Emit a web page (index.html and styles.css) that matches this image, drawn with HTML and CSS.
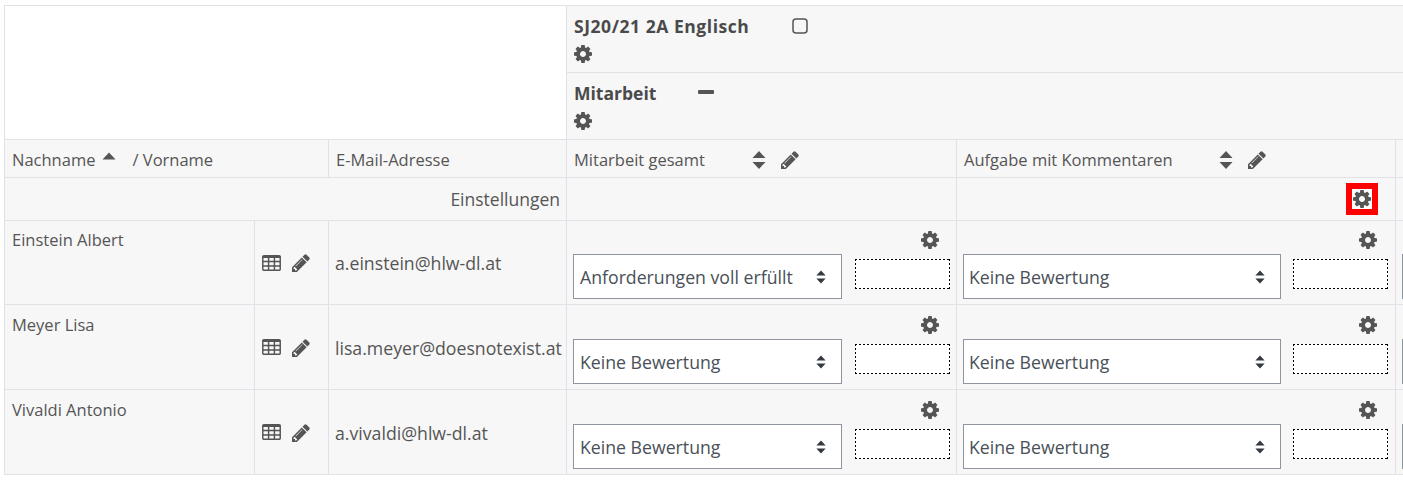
FILE: index.html
```html
<!DOCTYPE html>
<html lang="de">
<head>
<meta charset="utf-8">
<title>Bewertungen</title>
<link rel="stylesheet" href="styles.css">
</head>
<body>
<svg class="defs" width="0" height="0" aria-hidden="true">
  <symbol id="cog" viewBox="128 128 1536 1536"><path d="M1152 896q0-106-75-181t-181-75-181 75-75 181 75 181 181 75 181-75 75-181zm512-109v222q0 12-8 23t-20 13l-185 28q-19 54-39 91 35 50 107 138 10 12 10 25t-9 23q-27 37-99 108t-94 71q-12 0-26-9l-138-108q-44 23-91 38-16 136-29 186-7 28-36 28h-222q-14 0-24.500-8.500t-11.500-21.500l-28-184q-49-16-90-37l-141 107q-10 9-25 9-14 0-25-11-126-114-165-168-7-10-7-23 0-12 8-23 15-21 51-66.500t54-70.500q-27-50-41-99l-183-27q-13-2-21-12.500t-8-23.500v-222q0-12 8-23t19-13l186-28q14-46 39-92-40-57-107-138-10-12-10-24 0-10 9-23 26-36 98.500-107.500t94.500-71.500q13 0 26 10l138 107q44-23 91-38 16-136 29-186 7-28 36-28h222q14 0 24.500 8.500t11.500 21.500l28 184q49 16 90 37l142-107q9-9 24-9 13 0 25 10 129 119 165 170 7 8 7 22 0 12-8 23-15 21-51 66.500t-54 70.500q26 50 41 98l183 28q13 2 21 12.500t8 23.500z"/></symbol>
  <symbol id="pencil" viewBox="0 0 1536 1536"><path d="M363 1408l91-91-235-235-91 91v107h128v128h107zm523-928q0-22-22-22-10 0-17 7l-542 542q-7 7-7 17 0 22 22 22 10 0 17-7l542-542q7-7 7-17zm-54-192l416 416-832 832h-416v-416zm683 96q0 53-37 90l-166 166-416-416 166-165q36-38 90-38 53 0 91 38l235 234q37 39 37 91z"/></symbol>
  <symbol id="grid" viewBox="0 0 1664 1408"><path d="M512 1248v-192q0-14-9-23t-23-9h-320q-14 0-23 9t-9 23v192q0 14 9 23t23 9h320q14 0 23-9t9-23zm0-384v-192q0-14-9-23t-23-9h-320q-14 0-23 9t-9 23v192q0 14 9 23t23 9h320q14 0 23-9t9-23zm512 384v-192q0-14-9-23t-23-9h-320q-14 0-23 9t-9 23v192q0 14 9 23t23 9h320q14 0 23-9t9-23zm-512-768v-192q0-14-9-23t-23-9h-320q-14 0-23 9t-9 23v192q0 14 9 23t23 9h320q14 0 23-9t9-23zm512 384v-192q0-14-9-23t-23-9h-320q-14 0-23 9t-9 23v192q0 14 9 23t23 9h320q14 0 23-9t9-23zm512 384v-192q0-14-9-23t-23-9h-320q-14 0-23 9t-9 23v192q0 14 9 23t23 9h320q14 0 23-9t9-23zm-512-768v-192q0-14-9-23t-23-9h-320q-14 0-23 9t-9 23v192q0 14 9 23t23 9h320q14 0 23-9t9-23zm512 384v-192q0-14-9-23t-23-9h-320q-14 0-23 9t-9 23v192q0 14 9 23t23 9h320q14 0 23-9t9-23zm0-384v-192q0-14-9-23t-23-9h-320q-14 0-23 9t-9 23v192q0 14 9 23t23 9h320q14 0 23-9t9-23zm128-320v1088q0 66-47 113t-113 47h-1344q-66 0-113-47t-47-113v-1088q0-66 47-113t113-47h1344q66 0 113 47t47 113z"/></symbol>
  <symbol id="sort" viewBox="0 0 14 18"><path d="M7 0l6.500 7H.5zM7 18L.5 11h13z"/></symbol>
  <symbol id="up" viewBox="0 0 14 8"><path d="M7 .5L13.500 7.500H.5z"/></symbol>
</svg>
<table class="grades">
  <colgroup>
    <col class="c-name"><col class="c-act"><col class="c-mail"><col class="c-g1"><col class="c-g2"><col class="c-g3">
  </colgroup>
  <tbody>
    <tr class="r-cat">
      <td class="blank" colspan="3" rowspan="2"></td>
      <td class="cat" colspan="3">
        <div class="cat-title"><b class="t1">SJ20/21 2A Englisch</b><svg class="ic-square" viewBox="0 0 16 16"><rect x="1" y="1" width="14" height="14" rx="3"/></svg></div>
        <svg class="ic ic-cog"><use href="#cog"/></svg>
      </td>
    </tr>
    <tr class="r-cat">
      <td class="cat" colspan="3">
        <div class="cat-title"><b class="t2">Mitarbeit</b><span class="minus"></span></div>
        <svg class="ic ic-cog"><use href="#cog"/></svg>
      </td>
    </tr>
    <tr class="r-head">
      <td colspan="2"><div class="head"><span>Nachname</span><svg class="ic-up"><use href="#up"/></svg><span class="vor">/ Vorname</span></div></td>
      <td><div class="head">E-Mail-Adresse</div></td>
      <td><div class="head"><span class="h1">Mitarbeit gesamt</span><svg class="ic-sort"><use href="#sort"/></svg><svg class="ic ic-pen"><use href="#pencil"/></svg></div></td>
      <td><div class="head"><span class="h2">Aufgabe mit Kommentaren</span><svg class="ic-sort"><use href="#sort"/></svg><svg class="ic ic-pen"><use href="#pencil"/></svg></div></td>
      <td></td>
    </tr>
    <tr class="r-set">
      <td class="set-label" colspan="3">Einstellungen</td>
      <td></td>
      <td><div class="set-cog"><span class="marked"><svg class="ic ic-cog"><use href="#cog"/></svg></span></div></td>
      <td></td>
    </tr>
    <tr class="r-user r1">
      <td class="name">Einstein Albert</td>
      <td><div class="acts"><svg class="ic ic-grid"><use href="#grid"/></svg><svg class="ic ic-pen"><use href="#pencil"/></svg></div></td>
      <td class="mail">a.einstein@hlw-dl.at</td>
      <td class="g"><div class="g-cog"><svg class="ic ic-cog"><use href="#cog"/></svg></div><div class="g-row"><div class="sel w1"><span>Anforderungen voll erfüllt</span><svg class="ic-sel"><use href="#sort"/></svg></div><div class="fb"></div></div></td>
      <td class="g"><div class="g-cog"><svg class="ic ic-cog"><use href="#cog"/></svg></div><div class="g-row"><div class="sel w2"><span>Keine Bewertung</span><svg class="ic-sel"><use href="#sort"/></svg></div><div class="fb"></div></div></td>
      <td class="g"><div class="g-row cut"><div class="sel w2"></div></div></td>
    </tr>
    <tr class="r-user r2">
      <td class="name">Meyer Lisa</td>
      <td><div class="acts"><svg class="ic ic-grid"><use href="#grid"/></svg><svg class="ic ic-pen"><use href="#pencil"/></svg></div></td>
      <td class="mail">lisa.meyer@doesnotexist.at</td>
      <td class="g"><div class="g-cog"><svg class="ic ic-cog"><use href="#cog"/></svg></div><div class="g-row"><div class="sel w1"><span>Keine Bewertung</span><svg class="ic-sel"><use href="#sort"/></svg></div><div class="fb"></div></div></td>
      <td class="g"><div class="g-cog"><svg class="ic ic-cog"><use href="#cog"/></svg></div><div class="g-row"><div class="sel w2"><span>Keine Bewertung</span><svg class="ic-sel"><use href="#sort"/></svg></div><div class="fb"></div></div></td>
      <td class="g"><div class="g-row cut"><div class="sel w2"></div></div></td>
    </tr>
    <tr class="r-user r2">
      <td class="name">Vivaldi Antonio</td>
      <td><div class="acts"><svg class="ic ic-grid"><use href="#grid"/></svg><svg class="ic ic-pen"><use href="#pencil"/></svg></div></td>
      <td class="mail">a.vivaldi@hlw-dl.at</td>
      <td class="g"><div class="g-cog"><svg class="ic ic-cog"><use href="#cog"/></svg></div><div class="g-row"><div class="sel w1"><span>Keine Bewertung</span><svg class="ic-sel"><use href="#sort"/></svg></div><div class="fb"></div></div></td>
      <td class="g"><div class="g-cog"><svg class="ic ic-cog"><use href="#cog"/></svg></div><div class="g-row"><div class="sel w2"><span>Keine Bewertung</span><svg class="ic-sel"><use href="#sort"/></svg></div><div class="fb"></div></div></td>
      <td class="g"><div class="g-row cut"><div class="sel w2"></div></div></td>
    </tr>
  </tbody>
</table>
</body>
</html>
```
FILE: styles.css
```css
html, body { background: #fff; }
body {
  margin: 0;
  padding: 5px 0 0 4px;
  width: 1399px;
  height: 475px;
  overflow: hidden;
  font-family: "Open Sans", "Noto Sans", sans-serif;
  font-size: 16.500px;
  color: #555;
}
.defs { position: absolute; }
.grades {
  border-collapse: collapse;
  table-layout: fixed;
  width: 1500px;
}
.c-name { width: 250px; }
.c-act { width: 74px; }
.c-mail { width: 238px; }
.c-g1 { width: 390px; }
.c-g2 { width: 439px; }
.c-g3 { width: 109px; }
td {
  border: 1px solid #e0e2e8;
  background: #f7f7f7;
  padding: 0;
  white-space: nowrap;
}
td.blank { background: #fff; }
.r-cat { height: 67px; }
.r-head { height: 38px; }
.r-set { height: 43px; }
.r1 { height: 84px; }
.r2 { height: 85px; }
.ic { display: block; fill: #555; }
.ic-cog { width: 18px; height: 18px; }
.ic-pen { width: 18px; height: 18px; }
.ic-grid { width: 19px; height: 16px; }
.cat { padding: 9px 7px 0; vertical-align: top; }
.cat-title { display: flex; align-items: center; height: 22px; margin-bottom: 8px; font-size: 17.500px; }
.cat-title b { font-weight: 700; color: #4a4a4a; }
.t1 { width: 218px; letter-spacing: .55px; }
.t2 { width: 124px; }
.ic-square { width: 16px; height: 16px; fill: none; stroke: #555; stroke-width: 1.500; }
.minus { width: 16px; height: 4px; border-radius: 1px; background: #555; margin-top: -2px; }
.head { display: flex; align-items: center; padding: 2px 7px 0; }
.ic-up { width: 14px; height: 8px; fill: #555; margin: -7px 0 0 7px; }
.vor { margin-left: 16px; }
.h1 { width: 178px; }
.h2 { width: 255px; }
.ic-sort { width: 14px; height: 18px; fill: #555; margin-right: 15px; }
.set-label { text-align: right; padding-right: 6px; font-size: 17.500px; }
.set-cog { display: flex; justify-content: flex-end; padding-right: 17px; }
.marked { display: block; border: 6px solid #f00; background: #fff; padding: 1px; }
.name { vertical-align: top; padding: 7px 7px 0; }
.r2 .name { padding-top: 8px; }
.acts { display: flex; gap: 11px; align-items: center; padding-left: 7px; }
.acts .ic-pen { margin-top: 1px; }
.mail { padding-left: 6px; font-size: 17.700px; }
.r2 .mail { padding-top: 2px; }
.g { vertical-align: top; padding: 10px 6px 0; }
.r2 .g { padding-top: 11px; }
.g-cog { display: flex; justify-content: flex-end; padding-right: 11px; height: 18px; margin-bottom: 5px; }
.r-user td:nth-child(5) .g-cog { padding-right: 12px; }
.g-row { display: flex; align-items: center; gap: 12px; }
.cut { margin-top: 23px; }
.sel {
  flex: none;
  display: flex;
  align-items: center;
  justify-content: space-between;
  height: 45px;
  padding: 0 15px 0 6px;
  border: 1px solid #8f959e;
  background: #fff;
  color: #495057;
  font-size: 17.700px;
  box-sizing: border-box;
}
.w1 { width: 269px; margin-right: 1px; }
.w2 { width: 318px; padding-left: 5px; }
.ic-sel { width: 10px; height: 14px; fill: #343a40; }
.fb {
  flex: none;
  width: 95px;
  height: 30px;
  margin-top: -5px;
  box-sizing: border-box;
  background:
    linear-gradient(90deg, #000 50%, transparent 50%) left top / 4px 1px repeat-x,
    linear-gradient(90deg, #000 50%, transparent 50%) left bottom / 4px 1px repeat-x,
    linear-gradient(#000 50%, transparent 50%) left top / 1px 4px repeat-y,
    linear-gradient(#000 50%, transparent 50%) right top / 1px 4px repeat-y,
    #fff;
}
```
